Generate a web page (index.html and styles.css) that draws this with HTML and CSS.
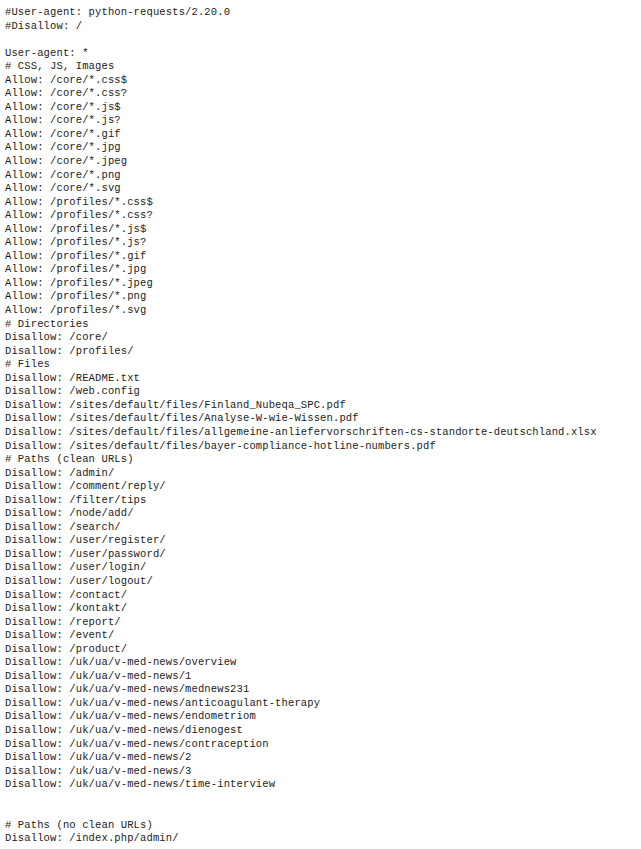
FILE: index.html
```html
<!DOCTYPE html>
<html>
<head>
<meta charset="utf-8">
<link rel="stylesheet" href="styles.css">
</head>
<body>
<pre class="robots">#User-agent: python-requests/2.20.0
#Disallow: /

User-agent: *
# CSS, JS, Images
Allow: /core/*.css$
Allow: /core/*.css?
Allow: /core/*.js$
Allow: /core/*.js?
Allow: /core/*.gif
Allow: /core/*.jpg
Allow: /core/*.jpeg
Allow: /core/*.png
Allow: /core/*.svg
Allow: /profiles/*.css$
Allow: /profiles/*.css?
Allow: /profiles/*.js$
Allow: /profiles/*.js?
Allow: /profiles/*.gif
Allow: /profiles/*.jpg
Allow: /profiles/*.jpeg
Allow: /profiles/*.png
Allow: /profiles/*.svg
# Directories
Disallow: /core/
Disallow: /profiles/
# Files
Disallow: /README.txt
Disallow: /web.config
Disallow: /sites/default/files/Finland_Nubeqa_SPC.pdf
Disallow: /sites/default/files/Analyse-W-wie-Wissen.pdf
Disallow: /sites/default/files/allgemeine-anliefervorschriften-cs-standorte-deutschland.xlsx
Disallow: /sites/default/files/bayer-compliance-hotline-numbers.pdf
# Paths (clean URLs)
Disallow: /admin/
Disallow: /comment/reply/
Disallow: /filter/tips
Disallow: /node/add/
Disallow: /search/
Disallow: /user/register/
Disallow: /user/password/
Disallow: /user/login/
Disallow: /user/logout/
Disallow: /contact/
Disallow: /kontakt/
Disallow: /report/
Disallow: /event/
Disallow: /product/
Disallow: /uk/ua/v-med-news/overview
Disallow: /uk/ua/v-med-news/1
Disallow: /uk/ua/v-med-news/mednews231
Disallow: /uk/ua/v-med-news/anticoagulant-therapy
Disallow: /uk/ua/v-med-news/endometriom
Disallow: /uk/ua/v-med-news/dienogest
Disallow: /uk/ua/v-med-news/contraception
Disallow: /uk/ua/v-med-news/2
Disallow: /uk/ua/v-med-news/3
Disallow: /uk/ua/v-med-news/time-interview


# Paths (no clean URLs)
Disallow: /index.php/admin/</pre>
</body>
</html>
```

FILE: styles.css
```css
html, body {
  margin: 0;
  padding: 0;
  background: #ffffff;
}
.robots {
  margin: 0;
  padding: 6px 0 0 5px;
  font-family: "Liberation Mono", "DejaVu Sans Mono", monospace;
  font-size: 10.5px;
  line-height: 13.55px;
  letter-spacing: 0.13px;
  color: #222222;
  white-space: pre;
}
```
